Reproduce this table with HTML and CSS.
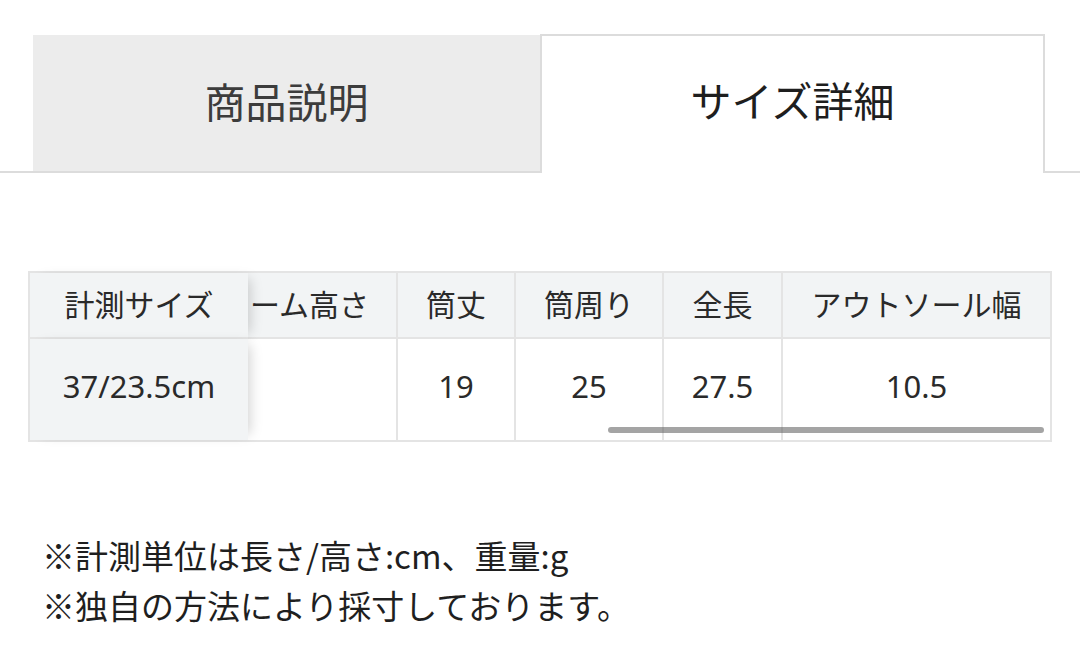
FILE: index.html
```html
<!DOCTYPE html>
<html lang="ja">
<head>
<meta charset="utf-8">
<title>サイズ詳細</title>
<link rel="stylesheet" href="styles.css">
</head>
<body>
<div class="tabs">
  <div class="tab tab-inactive">商品説明</div>
  <div class="tab tab-active">サイズ詳細</div>
</div>

<div class="table-wrap">
  <div class="grid">
    <div class="cell head sticky">計測サイズ</div>
    <div class="cell head clip">ーム高さ</div>
    <div class="cell head">筒丈</div>
    <div class="cell head">筒周り</div>
    <div class="cell head">全長</div>
    <div class="cell head last">アウトソール幅</div>

    <div class="cell body sticky num">37/23.5cm</div>
    <div class="cell body num"></div>
    <div class="cell body num">19</div>
    <div class="cell body num">25</div>
    <div class="cell body num">27.5</div>
    <div class="cell body num last">10.5</div>
  </div>
  <div class="scrollbar"></div>
</div>

<div class="notes">
  <p>※計測単位は長さ/高さ:cm、重量:g</p>
  <p>※独自の方法により採寸しております。</p>
</div>
</body>
</html>
```

FILE: styles.css
```css
html, body {
  margin: 0;
  padding: 0;
  background: #ffffff;
}

body {
  font-family: "Noto Sans CJK JP", "Noto Sans", sans-serif;
  color: #2a2a2a;
  width: 1080px;
  height: 645px;
  overflow: hidden;
}

.tabs {
  display: flex;
  padding-top: 34px;
  padding-left: 33px;
  border-bottom: 2px solid #dcdcdc;
  height: 137px;
}

.tab {
  display: flex;
  align-items: center;
  justify-content: center;
  font-size: 41px;
  line-height: 1;
  box-sizing: border-box;
}

.tab-inactive {
  width: 507px;
  margin-top: 1px;
  background: #ececec;
  color: #3c3c3c;
  padding-bottom: 6px;
}

.tab-active {
  width: 505px;
  background: #ffffff;
  border: 2px solid #dcdcdc;
  border-bottom: none;
  margin-bottom: -2px;
  height: 139px;
  color: #1e1e1e;
  padding-bottom: 10px;
}

.table-wrap {
  position: relative;
  margin: 98px 0 0 28px;
  width: 1024px;
  border: 2px solid #e4e4e4;
  border-left: none;
  box-sizing: border-box;
}

.grid {
  display: grid;
  grid-template-columns: 220px 148px 118px 148px 119px 1fr;
  grid-template-rows: 66px 101px;
}

.cell {
  display: flex;
  align-items: center;
  justify-content: center;
  font-size: 30px;
  line-height: 1;
  border-left: 2px solid #e4e4e4;
  box-sizing: border-box;
  color: #2a2a2a;
  white-space: nowrap;
}

.head {
  background: #f2f4f5;
  border-bottom: 2px solid #e4e4e4;
  padding-bottom: 4px;
}

.body {
  background: #ffffff;
  padding-bottom: 6px;
}

.num {
  font-family: "Noto Sans", "Noto Sans CJK JP", sans-serif;
  font-size: 31px;
}

.sticky {
  background: #f2f4f5;
  position: relative;
  z-index: 2;
  box-shadow: 8px 0 12px -6px rgba(0, 0, 0, 0.18);
}

.clip {
  justify-content: flex-start;
  padding-left: 2px;
  border-left: none;
}

.grid .cell:nth-child(8) {
  border-left: none;
}

.scrollbar {
  position: absolute;
  left: 580px;
  bottom: 7px;
  width: 436px;
  height: 6px;
  border-radius: 3px;
  background: rgba(90, 90, 90, 0.55);
  z-index: 3;
}

.notes {
  margin: 88px 0 0 42px;
}

.notes p {
  margin: 0;
  font-size: 33px;
  line-height: 50px;
  color: #1f1f1f;
  white-space: nowrap;
}
```
